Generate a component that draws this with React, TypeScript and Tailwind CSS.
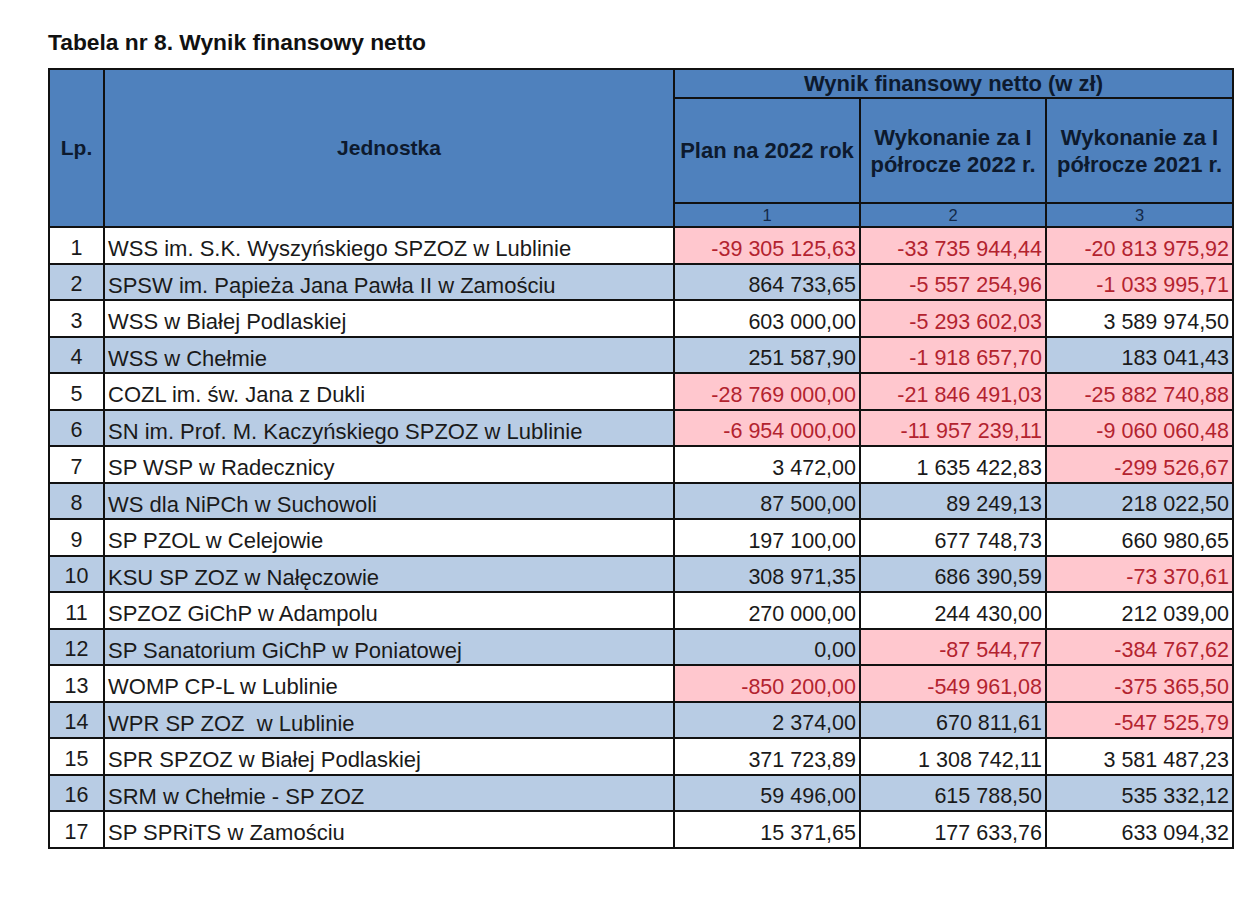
type Row = {
  lp: number;
  name: string;
  v: [string, string, string];
};

const rows: Row[] = [
  { lp: 1, name: 'WSS im. S.K. Wyszyńskiego SPZOZ w Lublinie', v: ['-39 305 125,63', '-33 735 944,44', '-20 813 975,92'] },
  { lp: 2, name: 'SPSW im. Papieża Jana Pawła II w Zamościu', v: ['864 733,65', '-5 557 254,96', '-1 033 995,71'] },
  { lp: 3, name: 'WSS w Białej Podlaskiej', v: ['603 000,00', '-5 293 602,03', '3 589 974,50'] },
  { lp: 4, name: 'WSS w Chełmie', v: ['251 587,90', '-1 918 657,70', '183 041,43'] },
  { lp: 5, name: 'COZL im. św. Jana z Dukli', v: ['-28 769 000,00', '-21 846 491,03', '-25 882 740,88'] },
  { lp: 6, name: 'SN im. Prof. M. Kaczyńskiego SPZOZ w Lublinie', v: ['-6 954 000,00', '-11 957 239,11', '-9 060 060,48'] },
  { lp: 7, name: 'SP WSP w Radecznicy', v: ['3 472,00', '1 635 422,83', '-299 526,67'] },
  { lp: 8, name: 'WS dla NiPCh w Suchowoli', v: ['87 500,00', '89 249,13', '218 022,50'] },
  { lp: 9, name: 'SP PZOL w Celejowie', v: ['197 100,00', '677 748,73', '660 980,65'] },
  { lp: 10, name: 'KSU SP ZOZ w Nałęczowie', v: ['308 971,35', '686 390,59', '-73 370,61'] },
  { lp: 11, name: 'SPZOZ GiChP w Adampolu', v: ['270 000,00', '244 430,00', '212 039,00'] },
  { lp: 12, name: 'SP Sanatorium GiChP w Poniatowej', v: ['0,00', '-87 544,77', '-384 767,62'] },
  { lp: 13, name: 'WOMP CP-L w Lublinie', v: ['-850 200,00', '-549 961,08', '-375 365,50'] },
  { lp: 14, name: 'WPR SP ZOZ  w Lublinie', v: ['2 374,00', '670 811,61', '-547 525,79'] },
  { lp: 15, name: 'SPR SPZOZ w Białej Podlaskiej', v: ['371 723,89', '1 308 742,11', '3 581 487,23'] },
  { lp: 16, name: 'SRM w Chełmie - SP ZOZ', v: ['59 496,00', '615 788,50', '535 332,12'] },
  { lp: 17, name: 'SP SPRiTS w Zamościu', v: ['15 371,65', '177 633,76', '633 094,32'] },
];

function NumCell({ value, shade }: { value: string; shade: boolean }) {
  const neg = value.startsWith('-');
  const bg = neg ? 'bg-[#ffc7ce] text-[#b3232f]' : shade ? 'bg-[#b8cce4] text-[#1a1a1a]' : 'bg-white text-[#1a1a1a]';
  return (
    <td className={`border-2 border-[#111] pr-[3px] pt-[8px] text-right text-[21.5px] leading-none ${bg}`}>
      {value}
    </td>
  );
}

export default function App() {
  return (
    <div className="min-h-[917px] bg-white pl-[48px] pt-[31px] font-['Liberation_Sans',Arial,sans-serif]">
      <h1 className="mb-[14px] text-[22.8px] font-bold leading-[23px] text-[#111]">
        Tabela nr 8. Wynik finansowy netto
      </h1>

      <table className="w-[1184px] table-fixed border-collapse">
        <colgroup>
          <col className="w-[55px]" />
          <col className="w-[570px]" />
          <col className="w-[186px]" />
          <col className="w-[186px]" />
          <col className="w-[187px]" />
        </colgroup>
        <thead className="bg-[#4f81bd] font-bold text-[#0d1a2e]">
          <tr className="h-[29px]">
            <th rowSpan={3} className="border-2 border-[#111] text-[21px]">Lp.</th>
            <th rowSpan={3} className="border-2 border-[#111] text-[21px]">Jednostka</th>
            <th colSpan={3} className="border-2 border-[#111] text-[22px] leading-none">
              Wynik finansowy netto (w zł)
            </th>
          </tr>
          <tr className="h-[105px]">
            <th className="border-2 border-[#111] text-[22px] leading-[27px]">Plan na 2022 rok</th>
            <th className="border-2 border-[#111] text-[22px] leading-[27px]">
              Wykonanie za I
              <br />
              półrocze 2022 r.
            </th>
            <th className="border-2 border-[#111] text-[22px] leading-[27px]">
              Wykonanie za I
              <br />
              półrocze 2021 r.
            </th>
          </tr>
          <tr className="h-[24px]">
            <th className="border-2 border-[#111] text-[16.5px] font-normal leading-none text-[#132a4a]">1</th>
            <th className="border-2 border-[#111] text-[16.5px] font-normal leading-none text-[#132a4a]">2</th>
            <th className="border-2 border-[#111] text-[16.5px] font-normal leading-none text-[#132a4a]">3</th>
          </tr>
        </thead>
        <tbody>
          {rows.map((r) => {
            const shade = r.lp % 2 === 0;
            const base = shade ? 'bg-[#b8cce4]' : 'bg-white';
            return (
              <tr key={r.lp} className="h-[36.5px]">
                <td className={`border-2 border-[#111] pt-[6px] text-center text-[21.5px] leading-none text-[#1a1a1a] ${base}`}>
                  {r.lp}
                </td>
                <td className={`border-2 border-[#111] pl-[3px] pt-[8px] text-[22px] leading-none whitespace-pre text-[#1a1a1a] ${base}`}>
                  {r.name}
                </td>
                {r.v.map((val, i) => (
                  <NumCell key={i} value={val} shade={shade} />
                ))}
              </tr>
            );
          })}
        </tbody>
      </table>
    </div>
  );
}
